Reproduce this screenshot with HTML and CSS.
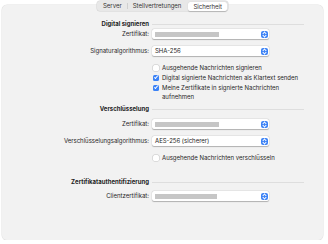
FILE: index.html
```html
<!DOCTYPE html>
<html lang="de">
<head>
    <meta charset="UTF-8">
    <title>Sicherheit</title>
    <link rel="stylesheet" href="styles.css">
</head>
<body>
    <div class="window">
        <div class="tabs">
            <span class="tab">Server</span>
            <span class="tab">Stellvertretungen</span>
            <span class="tab active">Sicherheit</span>
        </div>

        <div class="panel">
            <!-- Digital signieren -->
            <div class="section sign">
                <div class="heading">Digital signieren</div>
                <div class="rule"></div>

                <label class="label first-row">Zertifikat:</label>
                <div class="popup first-row"><span class="blank"></span><span class="stepper"></span></div>

                <label class="label">Signaturalgorithmus:</label>
                <div class="popup"><span class="value">SHA-256</span><span class="stepper"></span></div>

                <div class="checks">
                    <div class="check"><span class="box"></span><span>Ausgehende Nachrichten signieren</span></div>
                    <div class="check"><span class="box on"></span><span>Digital signierte Nachrichten als Klartext senden</span></div>
                    <div class="check"><span class="box on"></span><span>Meine Zertifikate in signierte Nachrichten aufnehmen</span></div>
                </div>
            </div>

            <!-- Verschlüsselung -->
            <div class="section crypt">
                <div class="heading">Verschlüsselung</div>
                <div class="rule"></div>

                <label class="label first-row">Zertifikat:</label>
                <div class="popup first-row"><span class="blank"></span><span class="stepper"></span></div>

                <label class="label">Verschlüsselungsalgorithmus:</label>
                <div class="popup"><span class="value">AES-256 (sicherer)</span><span class="stepper"></span></div>

                <div class="checks">
                    <div class="check"><span class="box"></span><span>Ausgehende Nachrichten verschlüsseln</span></div>
                </div>
            </div>

            <!-- Zertifikatauthentifizierung -->
            <div class="section auth">
                <div class="heading">Zertifikatauthentifizierung</div>
                <div class="rule"></div>

                <label class="label first-row">Clientzertifikat:</label>
                <div class="popup first-row"><span class="blank short"></span><span class="stepper"></span></div>
            </div>
        </div>
    </div>
</body>
</html>
```

FILE: styles.css
```css
:root {
    --panel: #f2f2f2;
    --text: #262626;
    --blue: #3b82f6;
    --rule: #dedede;
}

body {
    margin: 0;
    background: #fff;
    font-family: 'Inter', 'Liberation Sans', sans-serif;
    font-size: 6px;
    color: var(--text);
}

.window {
    width: 321px;
    margin-left: 2px;
    padding-top: 1px;
}

/* segmented control */
.tabs {
    position: relative;
    z-index: 1;
    display: flex;
    width: max-content;
    height: 10px;
    margin: 0 auto -6px;
    padding: 0 1px;
    background: #e8e8e8;
    border-radius: 3px;
    box-shadow: 0 0 0 0.5px #d2d2d2;
}

.tab {
    padding: 0 5px;
    line-height: 6px;
    margin: 2px 0;
    color: #333;
    border-left: 1px solid #cfcfcf;
}

.tab:first-child {
    border-left: none;
}

.tab.active {
    margin: 0.5px 0 0.5px 2px;
    line-height: 9px;
    background: #fff;
    border-left: none;
    border-radius: 2px;
    box-shadow: 0 0.5px 1px rgba(0,0,0,0.2);
}

.panel {
    height: 235px;
    box-sizing: border-box;
    background: var(--panel);
    border-radius: 5px;
    box-shadow: 0 0 0 0.5px #e2e2e2;
    padding: 15px 19px 0 0;
}

.section {
    display: grid;
    grid-template-columns: 147px 1fr;
    column-gap: 3px;
    align-items: center;
}

.section.crypt {
    margin-top: 4px;
}

.section.auth {
    margin-top: 16px;
}

.heading {
    justify-self: end;
    font-weight: 700;
    line-height: 8px;
    color: #1e1e1e;
}

.rule {
    height: 1px;
    background: var(--rule);
}

.label {
    justify-self: end;
    line-height: 10px;
    margin-top: 7px;
}

.popup {
    display: flex;
    align-items: center;
    justify-content: space-between;
    width: 117px;
    height: 10px;
    box-sizing: border-box;
    margin-top: 7px;
    padding: 0 1px 0 3px;
    background: #fff;
    border-radius: 2px;
    box-shadow: 0 0.5px 1px rgba(0,0,0,0.25), 0 0 0 0.5px rgba(0,0,0,0.06);
}

.sign .first-row {
    margin-top: 1px;
}

.crypt .first-row {
    margin-top: 6px;
}

.auth .first-row {
    margin-top: 5px;
}

.value {
    line-height: 10px;
}

.blank {
    width: 64px;
    height: 5px;
    background: #c6c6c6;
}

.blank.short {
    width: 62px;
}

.stepper {
    width: 7px;
    height: 7px;
    border-radius: 2px;
    background: var(--blue);
    position: relative;
}

.stepper::before,
.stepper::after {
    content: "";
    position: absolute;
    left: 2px;
    width: 2px;
    height: 2px;
    border-left: 0.7px solid #fff;
    border-top: 0.7px solid #fff;
}

.stepper::before {
    top: 1.4px;
    transform: rotate(45deg);
}

.stepper::after {
    top: 3.4px;
    transform: rotate(225deg);
}

.checks {
    grid-column: 2;
    margin-top: 7px;
    display: flex;
    flex-direction: column;
    gap: 1px;
}

.crypt .checks {
    margin-top: 7px;
}

.check {
    display: flex;
    align-items: flex-start;
    gap: 3px;
    padding-left: 1px;
    line-height: 9px;
}

.box {
    flex: none;
    width: 6px;
    height: 6px;
    margin-top: 1.5px;
    box-sizing: border-box;
    background: #fff;
    border-radius: 1.5px;
    box-shadow: 0 0 0 0.5px #c4c4c4;
    position: relative;
}

.box.on {
    background: var(--blue);
    box-shadow: none;
}

.box.on::after {
    content: "";
    position: absolute;
    left: 2px;
    top: 0.6px;
    width: 1.4px;
    height: 3px;
    border-right: 0.9px solid #fff;
    border-bottom: 0.9px solid #fff;
    transform: rotate(40deg);
}
```
